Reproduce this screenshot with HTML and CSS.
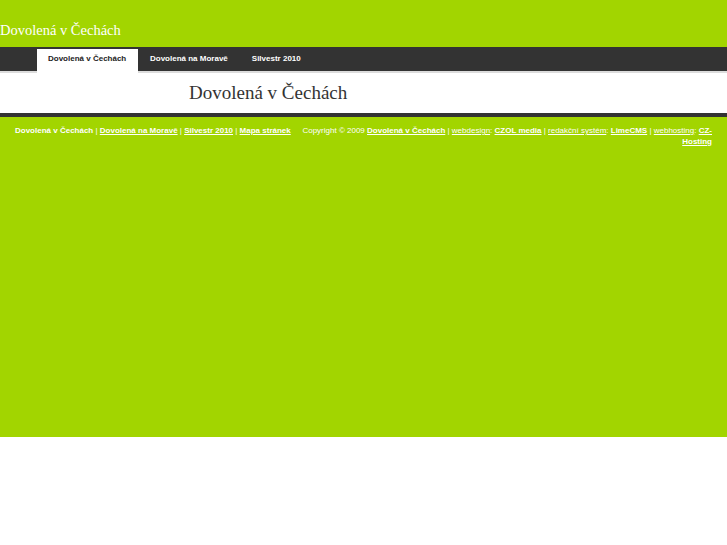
FILE: index.html
```html
<!DOCTYPE html>
<html lang="cs">
<head>
<meta charset="utf-8">
<title>Dovolená v Čechách</title>
<link rel="stylesheet" href="styles.css">
</head>
<body>
<div class="page">
  <header class="header">
    <div class="site-title">Dovolená v Čechách</div>
  </header>
  <nav class="nav">
    <a class="tab active" href="#">Dovolená v Čechách</a>
    <a class="tab" href="#">Dovolená na Moravě</a>
    <a class="tab" href="#">Silvestr 2010</a>
  </nav>
  <main class="content">
    <h1 class="heading">Dovolená v Čechách</h1>
  </main>
  <footer class="footer">
    <div class="foot-left">
      <b>Dovolená v Čechách</b> | <a class="fl" href="#">Dovolená na Moravě</a> | <a class="fl" href="#">Silvestr 2010</a> | <a class="fl" href="#">Mapa stránek</a>
    </div>
    <div class="foot-right">
      Copyright © 2009 <a class="fl" href="#">Dovolená v Čechách</a> | <a class="fn" href="#">webdesign</a>: <a class="fl" href="#">CZOL media</a> | <a class="fn" href="#">redakční systém</a>: <a class="fl" href="#">LimeCMS</a> | <a class="fn" href="#">webhosting</a>: <a class="fl" href="#">CZ-<wbr>Hosting</a>
    </div>
  </footer>
</div>
</body>
</html>
```
FILE: styles.css
```css
html, body {
  margin: 0;
  padding: 0;
  background: #ffffff;
}
.page {
  font-family: "Liberation Sans", Arial, sans-serif;
}
.header {
  background: #a2d500;
  height: 47px;
  display: flex;
  align-items: flex-end;
}
.site-title {
  font-family: "Liberation Serif", "Times New Roman", serif;
  font-size: 14.5px;
  color: #ffffff;
  line-height: 16px;
  padding-bottom: 9px;
}
.nav {
  background: #333333;
  height: 22px;
  padding: 2px 0 0 37px;
  display: flex;
  border-bottom: 2px solid #dcdcdc;
}
.tab {
  font-size: 8px;
  font-weight: bold;
  color: #ffffff;
  text-decoration: none;
  padding: 0 12px 0 12px;
  line-height: 20px;
}
.tab.active {
  background: #ffffff;
  color: #222222;
  padding: 0 11px;
  width: 79px;
  margin-bottom: -2px;
  line-height: 20px;
}
.content {
  height: 40px;
  border-bottom: 4px solid #333333;
  padding-left: 189px;
}
.heading {
  margin: 0;
  font-family: "Liberation Serif", "Times New Roman", serif;
  font-weight: normal;
  font-size: 19px;
  color: #333333;
  line-height: 22px;
  padding-top: 9px;
}
.footer {
  background: #a2d500;
  height: 302px;
  padding: 8px 15px 10px 15px;
  display: flex;
  justify-content: space-between;
  align-items: flex-start;
  gap: 6px;
  color: #ffffff;
  font-size: 8px;
  line-height: 11px;
}
.foot-left {
  white-space: nowrap;
}
.foot-right {
  text-align: right;
  width: 416px;
}
.fl {
  color: #ffffff;
  font-weight: bold;
  text-decoration: underline;
}
.fn {
  color: #ffffff;
  font-weight: normal;
  text-decoration: underline;
}
```
